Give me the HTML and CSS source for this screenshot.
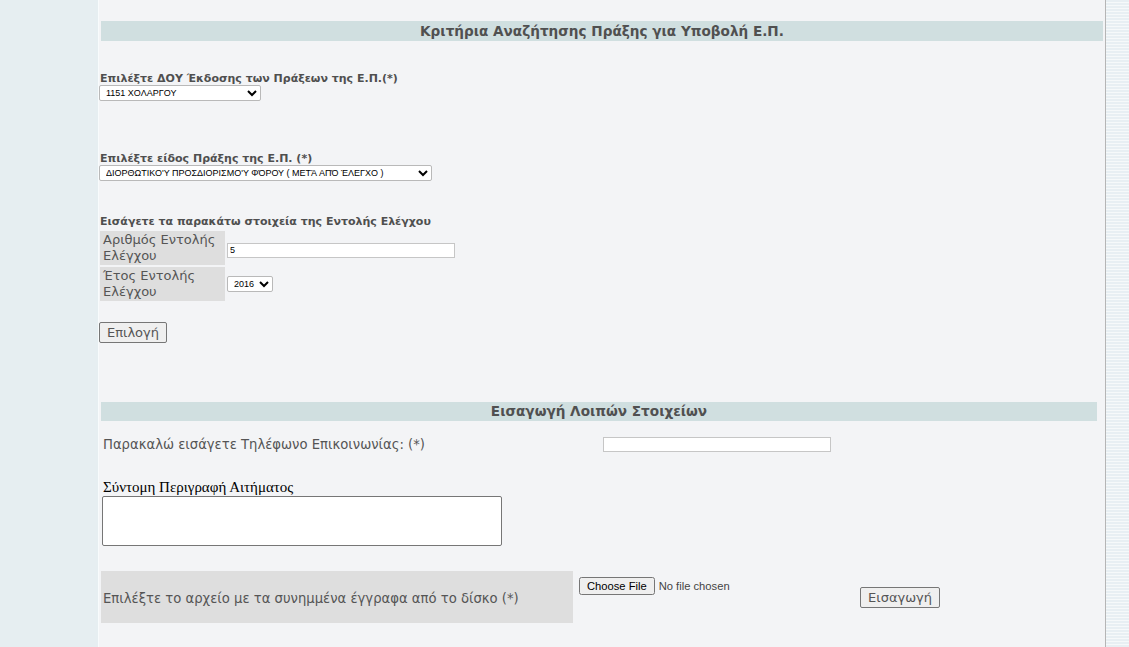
FILE: index.html
```html
<!DOCTYPE html>
<html lang="el">
<head>
    <meta charset="UTF-8">
    <title>Υποβολή Ε.Π.</title>
    <link rel="stylesheet" href="styles.css">
</head>
<body>
<div class="page">
    <aside class="side-left"></aside>

    <main class="content">
        <div class="bar bar-top">Κριτήρια Αναζήτησης Πράξης για Υποβολή Ε.Π.</div>

        <form class="criteria">
            <label class="lbl lbl-first" for="dou">Επιλέξτε ΔΟΥ Έκδοσης των Πράξεων της Ε.Π.(*)</label>
            <select id="dou" class="sel sel-dou">
                <option>1151 ΧΟΛΑΡΓΟΥ</option>
            </select>

            <label class="lbl lbl-second" for="eidos">Επιλέξτε είδος Πράξης της Ε.Π. (*)</label>
            <select id="eidos" class="sel sel-eidos">
                <option>ΔΙΟΡΘΩΤΙΚΟ'Υ ΠΡΟΣΔΙΟΡΙΣΜΟ'Υ ΦΌΡΟΥ ( ΜΕΤΆ ΑΠΌ ΈΛΕΓΧΟ )</option>
            </select>

            <div class="lbl lbl-third">Εισάγετε τα παρακάτω στοιχεία της Εντολής Ελέγχου</div>
            <table class="order">
                <tr>
                    <td class="cell-name">Αριθμός Εντολής Ελέγχου</td>
                    <td class="cell-value"><input type="text" class="txt txt-order" value="5"></td>
                </tr>
                <tr>
                    <td class="cell-name">Έτος Εντολής Ελέγχου</td>
                    <td class="cell-value">
                        <select class="sel sel-year"><option>2016</option></select>
                    </td>
                </tr>
            </table>

            <button type="button" class="btn btn-select">Επιλογή</button>
        </form>

        <div class="bar bar-second">Εισαγωγή Λοιπών Στοιχείων</div>

        <div class="phone-row">
            <span class="phone-label">Παρακαλώ εισάγετε Τηλέφωνο Επικοινωνίας: (*)</span>
            <input type="text" class="txt txt-phone">
        </div>

        <div class="desc-label">Σύντομη Περιγραφή Αιτήματος</div>
        <textarea class="desc"></textarea>

        <div class="file-row">
            <div class="file-label">Επιλέξτε το αρχείο με τα συνημμένα έγγραφα από το δίσκο (*)</div>
            <div class="file-cell"><input type="file" class="file-input"></div>
            <button type="button" class="btn btn-insert">Εισαγωγή</button>
        </div>
    </main>

    <aside class="side-right"></aside>
</div>
</body>
</html>
```

FILE: styles.css
```css
body {
    margin: 0;
    font-family: "DejaVu Sans", Verdana, sans-serif;
    color: #555;
    overflow: hidden;
}

.page {
    display: flex;
    height: 100vh;
}

.side-left {
    width: 98px;
    flex: none;
    background: #e6eef1;
    border-right: 1px solid #f8fbfc;
}

.side-right {
    width: 23px;
    flex: none;
    border-left: 1px solid #b5b5b5;
    background: repeating-linear-gradient(to bottom, #e8eff3 0, #e8eff3 2px, #f6f9fa 2px, #f6f9fa 3px);
}

.content {
    flex: 1;
    background: #f3f4f6;
    padding-top: 21px;
}

.bar {
    background: #d0dfe0;
    font-weight: bold;
    font-size: 13.6px;
    text-align: center;
    color: #505050;
}

.bar-top {
    margin: 0 2px;
    height: 20px;
    line-height: 20px;
}

.bar-second {
    margin: 59px 8px 0 2px;
    height: 19px;
    line-height: 19px;
}

.criteria {
    margin: 0;
}

.lbl {
    display: block;
    font-size: 11px;
    font-weight: bold;
    line-height: 13px;
    margin-left: 1px;
    color: #4f4f4f;
}

.lbl-first {
    margin-top: 31px;
}

.lbl-second {
    margin-top: 51px;
}

.lbl-third {
    margin-top: 34px;
}

.sel {
    display: block;
    font: 9px "Liberation Sans", Arial, sans-serif;
    color: #000;
    height: 16px;
    padding: 0 0 0 2px;
    border: 1px solid #b9b9b9;
    border-radius: 2px;
    background: #fff;
}

.sel-dou {
    width: 162px;
}

.sel-eidos {
    width: 333px;
}

.sel-year {
    width: 46px;
}

.order {
    border-spacing: 1px 2px;
    margin-top: 1px;
}

.cell-name {
    background: #dedede;
    width: 119px;
    padding: 1px 3px;
    font-size: 13px;
    line-height: 16px;
    color: #555;
    vertical-align: top;
}

.cell-value {
    padding: 0 1px;
    vertical-align: middle;
}

.txt {
    font: 9px "Liberation Sans", Arial, sans-serif;
    color: #000;
    border: 1px solid #c6c6c6;
    background: #fff;
    padding: 0 2px;
    height: 15px;
    box-sizing: border-box;
}

.txt-order {
    display: block;
    width: 228px;
    margin-top: 4px;
}

.btn {
    font-family: "DejaVu Sans", Verdana, sans-serif;
    font-size: 13px;
    color: #555;
    background: #efefef;
    border: 1px solid #767676;
    border-radius: 2px;
    height: 21px;
    padding: 0 5px;
}

.btn-select {
    display: block;
    margin-top: 19px;
    width: 68px;
}

.phone-row {
    display: flex;
    align-items: center;
    height: 30px;
    margin: 8px 0 0 4px;
    font-size: 13.2px;
}

.phone-label {
    width: 500px;
}

.txt-phone {
    width: 228px;
}

.desc-label {
    font-family: "Liberation Serif", "Times New Roman", serif;
    font-size: 15px;
    line-height: 17px;
    color: #000;
    margin: 20px 0 0 4px;
}

.desc {
    display: block;
    width: 400px;
    height: 50px;
    box-sizing: border-box;
    margin-left: 3px;
    border: 1px solid #767676;
    border-radius: 2px;
    background: #fff;
    resize: none;
}

.file-row {
    display: flex;
    align-items: center;
    margin: 25px 0 0 2px;
}

.file-label {
    width: 472px;
    height: 52px;
    padding-left: 2px;
    display: flex;
    align-items: center;
    padding-top: 2px;
    box-sizing: border-box;
    background: #dedede;
    font-size: 13.2px;
}

.file-cell {
    width: 281px;
    margin-left: 6px;
    align-self: flex-start;
    padding-top: 4px;
}

.file-input {
    font: 11.2px "Liberation Sans", Arial, sans-serif;
    color: #444;
}

.btn-insert {
    padding: 0 6px;
    width: 80px;
}
```
